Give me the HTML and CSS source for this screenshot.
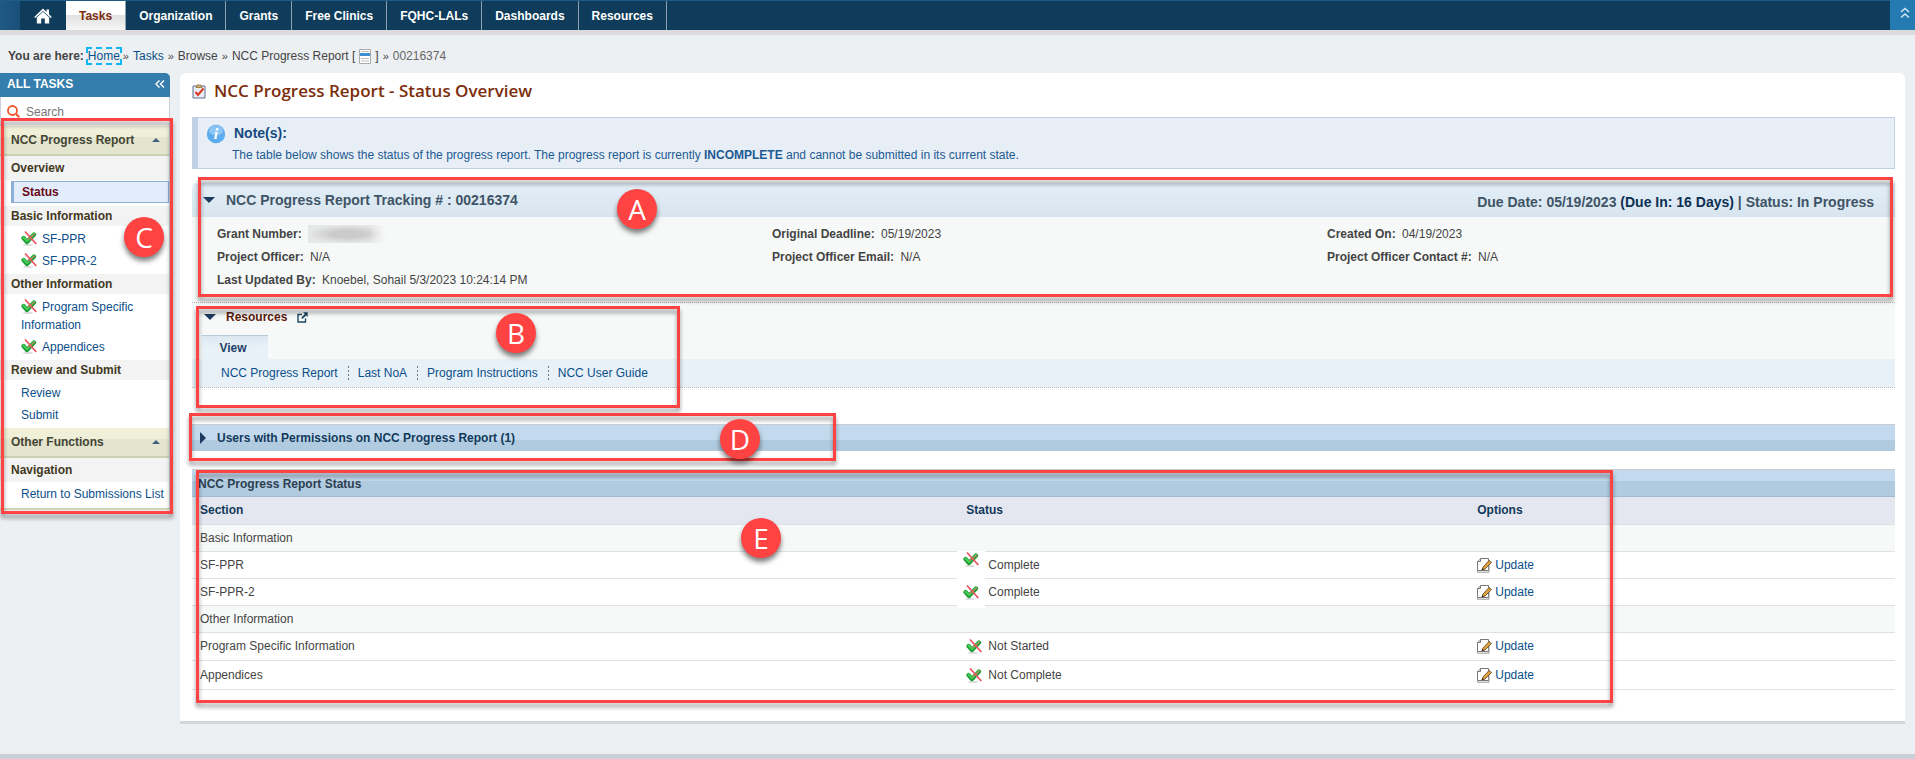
FILE: index.html
```html
<!DOCTYPE html>
<html lang="en">
<head>
    <meta charset="UTF-8">
    <meta name="viewport" content="width=device-width, initial-scale=1.0">
    <title>NCC Progress Report - Status Overview</title>

    <link rel="stylesheet" href="styles.css">
</head>
<body>

    <!-- shared icons -->
    <svg class="sprite" width="0" height="0" aria-hidden="true">
        <symbol id="check-x" viewBox="0 0 16 16">
            <ellipse cx="7" cy="15" rx="5" ry="1" fill="#ddd"/>
            <path d="M2.5 8 L6 12 L13 4.5" fill="none" stroke="#1f9a35" stroke-width="4.2" stroke-linejoin="round" stroke-linecap="round"/>
            <path d="M2.5 7.5 L6 11 L13 4" fill="none" stroke="#41cf55" stroke-width="2.2" stroke-linejoin="round" stroke-linecap="round"/>
            <path d="M4 1.5 L15.3 14" fill="none" stroke="#ee5560" stroke-width="1.8"/>
            <path d="M14 4 L6.5 9.5" fill="none" stroke="#ee5560" stroke-width="1"/>
        </symbol>
        <symbol id="edit" viewBox="0 0 16 16">
            <path d="M4.5 1.5 H12.5 V13.5 H1.5 V4.5 Z" fill="#fff" stroke="#777"/>
            <path d="M4.5 1.5 V4.5 H1.5" fill="#ddd" stroke="#777"/>
            <path d="M1.5 13.5 V15.2 H13 V4" fill="none" stroke="#999"/>
            <path d="M6 13 L7 10 L13 3.5 L15.5 5.5 L9 12 Z" fill="#e0a040" stroke="#5c4420" stroke-width="0.8"/>
            <path d="M6 13 L6.5 11 L8 12.4 Z" fill="#222"/>
        </symbol>
    </svg>

    <header class="topbar">
        <nav class="topnav">
            <a class="home" href="#" aria-label="Home">
                <svg width="18" height="16" viewBox="0 0 18 16"><path d="M9 0.5 L12.5 4 V1.5 H15 V6.3 L17.8 9 L16.8 10 L9 3 L1.2 10 L0.2 9 Z M9 3.8 L15.2 9.5 V15.5 H10.8 V10.5 H7.2 V15.5 H2.8 V9.5 Z" fill="#fff"/></svg>
            </a>
            <a class="active" href="#">Tasks</a>
            <a href="#">Organization</a>
            <a href="#">Grants</a>
            <a href="#">Free Clinics</a>
            <a href="#">FQHC-LALs</a>
            <a href="#">Dashboards</a>
            <a href="#">Resources</a>
        </nav>
        <button class="collapse-top" type="button" aria-label="Collapse header">
            <svg width="10" height="12" viewBox="0 0 10 12"><path d="M1 5 L5 1.5 L9 5 M1 10.5 L5 7 L9 10.5" fill="none" stroke="#cfe8f8" stroke-width="1.5"/></svg>
        </button>
    </header>

    <div class="breadcrumb">
        <b>You are here:</b>
        <a class="focused" href="#">Home</a>
        <i>»</i> <a href="#">Tasks</a> <i>»</i> Browse <i>»</i> NCC Progress Report [
        <svg width="12" height="15" viewBox="0 0 12 15"><path d="M0.5 0.5 H11.5 V14.5 H0.5 Z" fill="#fff" stroke="#aaa"/><path d="M1 4 H11 V7 H1 Z" fill="#3d8fd1"/><path d="M2 2.5 H10 M2 9.5 H10 M2 12 H10" stroke="#bbb"/></svg>
        ] <i>»</i> <span class="muted">00216374</span>
    </div>

    <div class="layout">
        <aside class="sidebar">
            <div class="side-title">
                ALL TASKS
                <button type="button" aria-label="Collapse menu">
                    <svg width="10" height="8" viewBox="0 0 10 8"><path d="M4.5 0.5 L1 4 L4.5 7.5 M9 0.5 L5.5 4 L9 7.5" fill="none" stroke="#fff" stroke-width="1.4"/></svg>
                </button>
            </div>
            <label class="search">
                <svg width="13" height="13" viewBox="0 0 13 13"><circle cx="5.5" cy="5.5" r="4.5" fill="none" stroke="#f0562c" stroke-width="1.8"/><path d="M9 9 L12.3 12.3" stroke="#f0562c" stroke-width="2"/></svg>
                <input type="text" placeholder="Search" aria-label="Search tasks">
            </label>

            <div class="side-group">NCC Progress Report <span class="up"></span></div>
            <h3 class="side-head first">Overview</h3>
            <ul>
                <li class="selected"><a href="#">Status</a></li>
            </ul>
            <h3 class="side-head">Basic Information</h3>
            <ul>
                <li><a href="#"><svg class="icon"><use href="#check-x"/></svg>SF-PPR</a></li>
                <li><a href="#"><svg class="icon"><use href="#check-x"/></svg>SF-PPR-2</a></li>
            </ul>
            <h3 class="side-head">Other Information</h3>
            <ul>
                <li><a href="#"><svg class="icon"><use href="#check-x"/></svg>Program Specific Information</a></li>
                <li><a href="#"><svg class="icon"><use href="#check-x"/></svg>Appendices</a></li>
            </ul>
            <h3 class="side-head">Review and Submit</h3>
            <ul>
                <li><a href="#">Review</a></li>
                <li><a href="#">Submit</a></li>
            </ul>
            <div class="side-group">Other Functions <span class="up"></span></div>
            <h3 class="side-head first">Navigation</h3>
            <ul>
                <li><a href="#">Return to Submissions List</a></li>
            </ul>

            <div class="mark mark-c"></div>
            <span class="dot dot-c">C</span>
        </aside>

        <main class="content">
            <h1>
                <svg width="14" height="15" viewBox="0 0 14 15"><path d="M1 2 H13 V14 H1 Z" fill="#e9edf5" stroke="#5f6f8c"/><path d="M4 3.5 L5 1 H9 L10 3.5 Z" fill="#d8b36a" stroke="#80622c" stroke-width="0.7"/><path d="M3.5 8 L6 11 L11.5 4.5" fill="none" stroke="#d9381e" stroke-width="2"/></svg>
                NCC Progress Report - Status Overview
            </h1>

            <div class="note">
                <svg width="20" height="20" viewBox="0 0 20 20"><circle cx="10" cy="10" r="9.2" fill="#5cacee"/><ellipse cx="10" cy="6.5" rx="7" ry="5" fill="#8cc4f4"/><circle cx="11.2" cy="5.2" r="1.3" fill="#fff"/><path d="M10.8 8 L9.2 14.8" fill="none" stroke="#fff" stroke-width="2.2"/><path d="M8.6 8.4 H11 M8.6 14.4 H10.8" stroke="#fff" stroke-width="0.8"/></svg>
                <div>
                    <h2>Note(s):</h2>
                    <p>The table below shows the status of the progress report. The progress report is currently <b>INCOMPLETE</b> and cannot be submitted in its current state.</p>
                </div>
            </div>

            <section class="tracking">
                <div class="tracking-head">
                    <span class="down"></span>
                    <h2>NCC Progress Report Tracking # : 00216374</h2>
                    <p>Due Date: 05/19/2023 <b>(Due In: 16 Days)</b> | Status: In Progress</p>
                </div>
                <div class="details">
                    <div><b>Grant Number:</b> <span class="redacted"></span></div>
                    <div><b>Original Deadline:</b> 05/19/2023</div>
                    <div><b>Created On:</b> 04/19/2023</div>
                    <div><b>Project Officer:</b> N/A</div>
                    <div><b>Project Officer Email:</b> N/A</div>
                    <div><b>Project Officer Contact #:</b> N/A</div>
                    <div><b>Last Updated By:</b> Knoebel, Sohail 5/3/2023 10:24:14 PM</div>
                </div>
                <div class="mark mark-a"></div>
                <span class="dot dot-a">A</span>
            </section>

            <section class="resources">
                <div class="resources-head">
                    <span class="down"></span>
                    <h2>Resources</h2>
                    <svg width="11" height="11" viewBox="0 0 11 11"><path d="M5 2.5 H1 V10 H8.5 V6.5" fill="none" stroke="#1d4a66" stroke-width="1.4"/><path d="M6 0.3 H10.7 V5 L9.2 3.5 L5.5 7 L4.2 5.7 L7.8 2 Z" fill="#1d4a66"/></svg>
                </div>
                <button class="tab" type="button">View</button>
                <div class="links">
                    <a href="#">NCC Progress Report</a>
                    <a href="#">Last NoA</a>
                    <a href="#">Program Instructions</a>
                    <a href="#">NCC User Guide</a>
                </div>
                <div class="mark mark-b"></div>
                <span class="dot dot-b">B</span>
            </section>

            <section class="users">
                <span class="right"></span>
                <h2>Users with Permissions on NCC Progress Report (1)</h2>
                <div class="mark mark-d"></div>
                <span class="dot dot-d">D</span>
            </section>

            <section class="status">
                <table>
                    <caption>NCC Progress Report Status</caption>
                    <thead>
                        <tr><th class="col-section">Section</th><th class="col-status">Status</th><th>Options</th></tr>
                    </thead>
                    <tbody>
                        <tr class="group"><td colspan="3">Basic Information</td></tr>
                        <tr>
                            <td>SF-PPR</td>
                            <td><div class="state"><span class="patch"><svg class="icon"><use href="#check-x"/></svg></span>Complete</div></td>
                            <td><a href="#"><svg class="icon"><use href="#edit"/></svg>Update</a></td>
                        </tr>
                        <tr>
                            <td>SF-PPR-2</td>
                            <td><div class="state"><span class="patch low"><svg class="icon"><use href="#check-x"/></svg></span>Complete</div></td>
                            <td><a href="#"><svg class="icon"><use href="#edit"/></svg>Update</a></td>
                        </tr>
                        <tr class="group"><td colspan="3">Other Information</td></tr>
                        <tr class="tall">
                            <td>Program Specific Information</td>
                            <td><div class="state"><svg class="icon"><use href="#check-x"/></svg>Not Started</div></td>
                            <td><a href="#"><svg class="icon"><use href="#edit"/></svg>Update</a></td>
                        </tr>
                        <tr class="tall">
                            <td>Appendices</td>
                            <td><div class="state"><svg class="icon"><use href="#check-x"/></svg>Not Complete</div></td>
                            <td><a href="#"><svg class="icon"><use href="#edit"/></svg>Update</a></td>
                        </tr>
                    </tbody>
                </table>
                <div class="mark mark-e"></div>
                <span class="dot dot-e">E</span>
            </section>
        </main>
    </div>

    <footer class="footer"></footer>

</body>
</html>
```
FILE: styles.css
```css
*{
    box-sizing: border-box;
}

body{
    margin: 0;
    min-height: 100vh;
    display: flex;
    flex-direction: column;
    background-color: #ecf0f3;
    color: #444;
    font-family: "Liberation Sans", Arial, sans-serif;
    font-size: 12px;
    line-height: 18px;
}

h1, h2, h3, p, ul{
    margin: 0;
    padding: 0;
    font-size: 12px;
}

ul{
    list-style: none;
}

a{
    color: #0b4f8a;
    text-decoration: none;
}

button{
    border: 0;
    padding: 0;
    background: none;
    font: inherit;
}

svg{
    flex: none;
}

.sprite{
    position: absolute;
}

.icon{
    width: 16px;
    height: 16px;
}

/* top bar */
.topbar{
    display: flex;
    justify-content: space-between;
    height: 35px;
    padding-left: 20px;
    background: linear-gradient(to right, #1f5a85, #19507a 20px, #0e3c5a 20px);
    border-bottom: 5px solid #dcdada;
    box-shadow: inset 0 1px #1f5d87;
}

.topnav{
    display: flex;
    padding-top: 1px;
}

.topnav a{
    display: flex;
    align-items: center;
    padding: 0 13px;
    border-right: 1px solid #8ea3b1;
    color: #fff;
    font-weight: bold;
}

.topnav .home{
    border-right: 0;
    padding: 0 14px;
}

.topnav .active{
    background: linear-gradient(#fff 50%, #e2e0e0 50%, #f6f6f6);
    color: #7c2d0c;
}

.collapse-top{
    width: 25px;
    padding-left: 4px;
    background-color: #257ab1;
}

/* breadcrumb */
.breadcrumb{
    display: flex;
    align-items: center;
    gap: 4px;
    height: 38px;
    padding: 4px 8px 0;
}

.breadcrumb .focused{
    margin: 0 -3px 0 -2px;
    border: 2px dashed #12b5f5;
    line-height: 14px;
}

.breadcrumb i{
    font-style: normal;
    font-size: 11px;
}

.muted{
    color: #666;
}

.layout{
    display: flex;
    align-items: flex-start;
    gap: 10px;
    padding-right: 10px;
}

/* sidebar */
.sidebar{
    position: relative;
    width: 170px;
    flex: none;
    background-color: #fff;
    border-right: 1px solid #c9cfd8;
    border-bottom: 2px solid #d2d2bc;
    border-radius: 0 5px 0 0;
}

.side-title{
    display: flex;
    justify-content: space-between;
    align-items: center;
    height: 24px;
    margin-right: -1px;
    padding: 0 5px 2px 7px;
    background-color: #357dac;
    border-radius: 0 5px 0 0;
    color: #fff;
    font-weight: bold;
}

.search{
    display: flex;
    align-items: center;
    gap: 6px;
    height: 29px;
    padding-left: 6px;
    border-left: 1px solid #c9cfd8;
}

.search input{
    width: 120px;
    border: 0;
    padding: 0;
    outline: 0;
    font: inherit;
}

.search input::placeholder{
    color: #777;
}

.side-group{
    display: flex;
    justify-content: space-between;
    align-items: center;
    height: 30px;
    padding: 0 9px 0 11px;
    background: linear-gradient(#f0f0d8 40%, #e3e5cf 40%);
    border-bottom: 2px solid #cfcfb4;
    color: #444433;
    font-weight: bold;
}

.up{
    border: 4px solid transparent;
    border-top: 0;
    border-bottom-color: #44607c;
}

.side-head{
    padding: 1px 11px;
    background-color: #f3f3f3;
    color: #42381e;
}

.side-head.first{
    padding: 3px 11px;
}

.sidebar ul{
    padding: 2px 0;
}

.sidebar li{
    padding: 2px 4px 2px 21px;
}

.sidebar .first + ul{
    padding: 1px 0 3px;
}

.sidebar .selected{
    margin-left: 11px;
    padding: 1px 8px;
    border: 1px solid #8eb0d8;
    border-left-width: 3px;
    background-color: #e1edfb;
}

.selected a{
    color: #6b0a14;
    font-weight: bold;
}

.sidebar .icon{
    margin-right: 5px;
    vertical-align: -3px;
}

/* main panel */
.content{
    flex: 1;
    padding: 0 10px 31px 12px;
    background-color: #fff;
    border-bottom: 3px solid #d3d7da;
    border-radius: 6px 6px 0 0;
}

h1{
    display: flex;
    align-items: center;
    gap: 8px;
    height: 36px;
    color: #7c2d0c;
    font-family: "Open Sans", sans-serif;
    font-size: 17px;
    font-weight: 600;
}

.note{
    display: flex;
    gap: 6px;
    margin-top: 8px;
    padding: 6px 8px 4px;
    border: 1px solid #c0d1e5;
    border-left-width: 6px;
    background-color: #e7eef6;
    color: #1d5a94;
}

.note h2{
    padding-left: 2px;
    color: #154a80;
    font-size: 14px;
}

.note p{
    padding-top: 4px;
}

.down{
    border: 6px solid transparent;
    border-bottom: 0;
    border-top-color: #1f3a5f;
}

.right{
    border: 6px solid transparent;
    border-right: 0;
    border-left-color: #1f3a5f;
}

.tracking, .resources, .users, .status{
    position: relative;
}

.tracking{
    margin-top: 14px;
    background-color: #f7f9f8;
    border-bottom: 1px dotted #bbb;
}

.tracking-head{
    display: flex;
    align-items: center;
    gap: 11px;
    height: 34px;
    padding: 0 21px 0 11px;
    background: linear-gradient(#e3eff8, #d8e5ee);
    border-radius: 6px 0 0 0;
    color: #3f5466;
}

.tracking-head h2{
    flex: 1;
    font-size: 14px;
}

.tracking-head p{
    padding-top: 4px;
    font-size: 14px;
    font-weight: bold;
}

.tracking-head b{
    color: #0c2f52;
}

.details{
    display: grid;
    grid-template-columns: repeat(3, 1fr);
    row-gap: 5px;
    padding: 8px 13px 13px 25px;
}

.details b{
    margin-right: 3px;
}

.redacted{
    display: inline-block;
    width: 78px;
    height: 18px;
    vertical-align: top;
    background: radial-gradient(closest-side, #cbcbcb 40%, transparent) #e6e7e7;
    mask-image: linear-gradient(to right, #000 80%, transparent);
}

.resources{
    padding-top: 5px;
    background-color: #f7f9f8;
    border-bottom: 1px dotted #bbb;
}

.resources-head{
    display: flex;
    align-items: center;
    gap: 10px;
    padding-left: 12px;
}

.resources-head h2{
    color: #5c1a0c;
}

.tab{
    display: block;
    width: 66px;
    height: 24px;
    margin: 9px 0 0 10px;
    padding-right: 4px;
    border-top: 1px solid #b5cbdc;
    background: linear-gradient(#dbe7f0, #e8f1f8 50%);
    color: #1d3f66;
    font-weight: bold;
}

.links{
    display: flex;
    padding: 5px 19px;
    background-color: #e8f1f8;
}

.links a{
    padding: 0 10px;
}

.links a + a{
    background: linear-gradient(#777 50%, transparent 50%) 0 2px / 1px 4px repeat-y;
}

.users{
    display: flex;
    align-items: center;
    gap: 11px;
    height: 27px;
    margin-top: 36px;
    padding-left: 8px;
    border-top: 1px solid #ccc;
    background: linear-gradient(#c3d9ed 58%, #b0cbdf 58%);
    color: #12395a;
}

.status{
    margin-top: 18px;
}

table{
    width: 100%;
    border-collapse: collapse;
    table-layout: fixed;
}

caption{
    height: 28px;
    padding: 5px 6px;
    border-top: 1px solid #ccc;
    border-bottom: 1px solid #9fbdd2;
    background: linear-gradient(#c3d9ed 42%, #b0cbdf 42%);
    color: #2d3f50;
    font-weight: bold;
    text-align: left;
}

th, td{
    height: 27px;
    padding: 0 8px;
    border-bottom: 1px solid #e1e1e1;
    text-align: left;
}

th{
    background-color: #e4e7f0;
    color: #12395a;
}

.col-section{
    width: 45%;
}

.col-status{
    width: 30%;
}

td:last-child a{
    margin-left: -1px;
}

.group td{
    background-color: #f7f9f8;
}

.tall td{
    height: 28px;
}

.tall:last-child td{
    height: 29px;
}

td a{
    display: flex;
    align-items: center;
    gap: 3px;
}

.state{
    display: flex;
    align-items: center;
    gap: 6px;
}

/* white box behind the icon, runs over the row lines */
.patch{
    display: flex;
    align-items: flex-start;
    justify-content: center;
    width: 28px;
    height: 28px;
    margin: -4px -3px -4px -9px;
    border-bottom: 1px solid #e1e1e1;
    background-color: #fff;
}

.patch.low{
    align-items: center;
    height: 32px;
    border-bottom: 0;
}

/* callouts */
.mark{
    position: absolute;
    border: 3px solid #ff4343;
    filter: drop-shadow(0 4px 2px rgba(0, 0, 0, 0.4));
    z-index: 1;
}

.dot{
    position: absolute;
    width: 40px;
    height: 40px;
    border-radius: 50%;
    background-color: #ff4343;
    box-shadow: 0 4px 5px rgba(0, 0, 0, 0.5);
    color: #fff;
    font-family: "Open Sans", sans-serif;
    font-size: 28px;
    line-height: 40px;
    text-align: center;
    z-index: 2;
}

.mark-a{ top: -6px; right: 2px; bottom: 5px; left: 6px; }
.dot-a{ top: 6px; left: 425px; }

.mark-b{ top: 3px; bottom: -21px; left: 4px; width: 484px; }
.dot-b{ top: 10px; left: 304px; }

.mark-c{ top: 45px; right: -4px; bottom: -6px; left: 1px; }
.dot-c{ top: 144px; right: 5px; }

.mark-d{ top: -12px; bottom: -10px; left: -3px; width: 647px; }
.dot-d{ top: -6px; left: 528px; }

.mark-e{ top: 1px; bottom: -13px; left: 4px; width: 1417px; }
.dot-e{ top: 49px; left: 549px; }

.footer{
    height: 5px;
    margin-top: auto;
    background-color: #c9cfd8;
}
```
